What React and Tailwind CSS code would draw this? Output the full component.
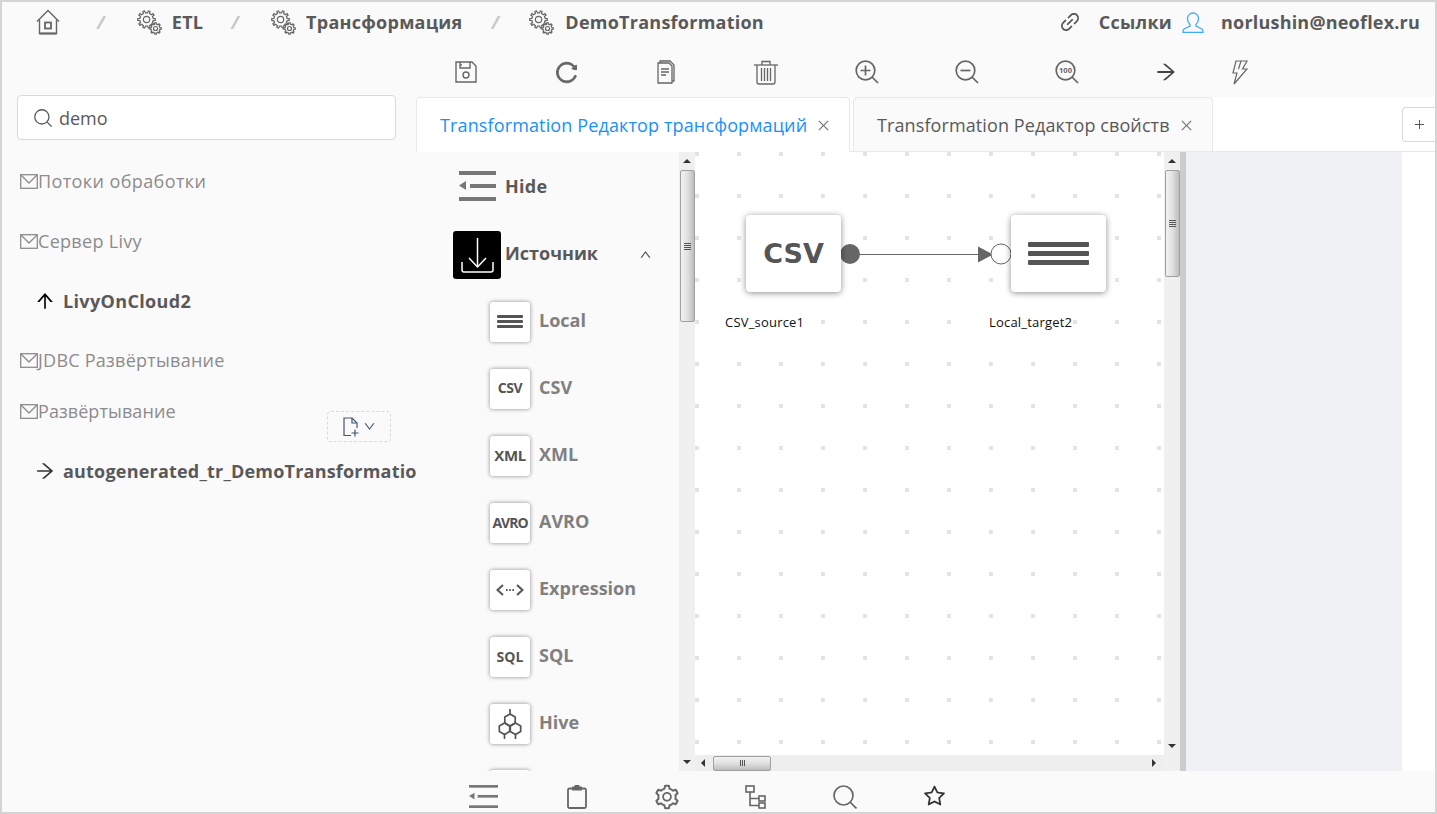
import React from "react";
import {
  AiOutlineArrowRight,
  AiOutlineArrowUp,
  AiOutlineClose,
  AiOutlineDown,
  AiOutlineLink,
  AiOutlinePlus,
  AiOutlineReload,
  AiOutlineSetting,
  AiOutlineStar,
  AiOutlineUp,
} from "react-icons/ai";

const FONT = "font-['Open_Sans',sans-serif]";

// --- Small drawings ---
function gearPath(cx, cy, r, teeth) {
  const pts = [];
  const step = (Math.PI * 2) / teeth;
  for (let i = 0; i < teeth; i++) {
    const a = i * step;
    const inner = r * 0.76;
    [
      [a - step * 0.5, inner],
      [a - step * 0.26, inner],
      [a - step * 0.16, r],
      [a + step * 0.16, r],
      [a + step * 0.26, inner],
    ].forEach(([t, rad]) => pts.push(`${(cx + Math.cos(t) * rad).toFixed(2)} ${(cy + Math.sin(t) * rad).toFixed(2)}`));
  }
  return "M" + pts.join("L") + "Z";
}

const Gears = () => (
  <svg width="25" height="25" viewBox="0 0 25 25" fill="none" stroke="#666" strokeWidth="1.2" className="shrink-0">
    <path d={gearPath(9.5, 9.5, 8.8, 10)} />
    <circle cx="9.5" cy="9.5" r="3.2" />
    <path d={gearPath(18.5, 18.5, 5.8, 8)} fill="#fafafa" />
    <circle cx="18.5" cy="18.5" r="2" />
  </svg>
);

const HomeIcon = () => (
  <svg width="24" height="26" viewBox="0 0 24 26" fill="none" stroke="#666" strokeWidth="1.4" className="shrink-0">
    <path d="M1 12.5 12 1.5l11 11" />
    <path d="M3.5 11v13.5h17V11" />
    <path d="M3.5 24.5h17" strokeWidth="2" />
    <rect x="9" y="13.5" width="6" height="6" strokeWidth="1.8" />
  </svg>
);

const UserIcon = () => (
  <svg width="22" height="21" viewBox="0 0 22 21" fill="none" stroke="#40a9ff" strokeWidth="1.3" className="shrink-0">
    <path d="M11 1a5.5 5.5 0 0 0-5.5 5.5c0 2.5 1 4.5 2.5 6V14l-6 3c-1 .5-1 1.5-1 3.5h20c0-2 0-3-1-3.5l-6-3v-1.5c1.5-1.5 2.5-3.5 2.5-6A5.5 5.5 0 0 0 11 1z" />
  </svg>
);

const SearchIcon = ({ size, width, color }) => (
  <svg width={size} height={size} viewBox="0 0 24 24" fill="none" stroke={color} strokeWidth={width} className="shrink-0">
    <circle cx="10.5" cy="10.5" r="9.5" />
    <path d="m17.5 17.5 6 6" />
  </svg>
);

const MailIcon = () => (
  <svg width="18" height="15" viewBox="0 0 18 15" fill="none" stroke="#8c8c8c" strokeWidth="1.3" className="shrink-0">
    <rect x="0.7" y="0.7" width="16.6" height="13.6" />
    <path d="m1 1 8 8 8-8" />
  </svg>
);

const FileAddIcon = () => (
  <svg width="17" height="20" viewBox="0 0 17 20" fill="none" stroke="#46566e" strokeWidth="1.2" className="shrink-0">
    <path d="M8 18.5H1V1h8l5 5v5" />
    <path d="M9 1v5h5" />
    <path d="M12 12.5v7M8.5 16h7" />
  </svg>
);

const Slash = ({ className }) => <span className={`text-[18px] text-[#c8c8c8] italic ${className}`}>/</span>;

const SaveIcon = () => (
  <svg width="22" height="22" viewBox="0 0 22 22" fill="none" stroke="#666" strokeWidth="1.4">
    <path d="M1 1h16l4 4v16H1z" />
    <path d="M5 1v6h10V1" />
    <path d="M6 3v2" />
    <circle cx="11" cy="14" r="3" />
  </svg>
);

const DocIcon = () => (
  <svg width="18" height="24" viewBox="0 0 18 24" fill="none" stroke="#666" strokeWidth="1.3">
    <path d="M3 3V1h10l4 4v16h-2" />
    <path d="M1 3h11l3 3v17H1z" />
    <path d="M4 9h8M4 12h8M4 15h5" />
  </svg>
);

const TrashIcon = () => (
  <svg width="24" height="25" viewBox="0 0 24 25" fill="none" stroke="#666" strokeWidth="1.3">
    <path d="M0 5h24" />
    <path d="M8 5V1.5h8V5" />
    <path d="M3 5v17a2 2 0 0 0 2 2h14a2 2 0 0 0 2-2V5" />
    <path d="M7.5 8v13M10.5 8v13M13.5 8v13M16.5 8v13" />
  </svg>
);

const ZoomIcon = ({ mark }) => (
  <svg width="24" height="24" viewBox="0 0 24 24" fill="none" stroke="#666" strokeWidth="1.7" className="translate-x-[1px]">
    <circle cx="10.5" cy="10.5" r="9.3" />
    <path d="m17 17 6 6" />
    {mark === "plus" && <path d="M5.5 10.5h10M10.5 5.5v10" />}
    {mark === "minus" && <path d="M5.5 10.5h10" />}
    {mark === "100" && (
      <text x="10.5" y="13.2" textAnchor="middle" fontSize="7.5" fontWeight="700" fill="#666" stroke="none" fontFamily="Open Sans">
        100
      </text>
    )}
  </svg>
);

const BoltIcon = () => (
  <svg width="16" height="25" viewBox="0 0 16 25" fill="none" stroke="#666" strokeWidth="1.2">
    <path d="M4 1h11l-4.5 8H15L2 24l3-11H1z" />
    <path d="M9 1 6.5 9" />
  </svg>
);

const HideIcon = ({ w, h, t }) => (
  <svg width={w} height={h} viewBox="0 0 37 30" fill="#777" preserveAspectRatio="none" className="shrink-0">
    <rect x="0" y="0" width="37" height={t} />
    <rect x="11" y="13" width="26" height={t} />
    <path d="M0 14.5 7 10v9z" />
    <rect x="0" y={30 - t} width="37" height={t} />
  </svg>
);

const DownloadIcon = () => (
  <svg width="48" height="48" viewBox="0 0 48 48" fill="none" stroke="#fff" strokeWidth="1.5">
    <path d="M24.5 7v29" />
    <path d="m16 27 8.5 9 8.5-9" />
    <path d="M9 31v8a2 2 0 0 0 2 2h27a2 2 0 0 0 2-2v-8" />
  </svg>
);

const ClipboardIcon = () => (
  <svg width="20" height="24" viewBox="0 0 20 24" fill="none" stroke="#666" strokeWidth="1.8">
    <rect x="1" y="3.5" width="18" height="19.5" rx="1.5" />
    <path d="M6 4.5V2.5h2.5V1h3v1.5H14v2z" fill="#666" />
  </svg>
);

const TreeIcon = () => (
  <svg width="21" height="24" viewBox="0 0 21 24" fill="none" stroke="#666" strokeWidth="1.6">
    <rect x="1" y="1" width="8" height="6" />
    <rect x="14" y="11" width="6" height="5" />
    <rect x="14" y="18" width="6" height="5" />
    <path d="M5 7v13.5h9M5 13.5h9" />
  </svg>
);

const HiveIcon = () => (
  <svg width="24" height="30" viewBox="0 0 24 30" fill="none" stroke="#555" strokeWidth="1.7">
    <path d="M12 0v5" />
    <path d="m12 5 5.2 3v6L12 17l-5.2-3V8z" />
    <path d="m6.5 14 5.2 3v5.5l-5.2 3-5.2-3V17z" />
    <path d="m17.5 14 5.2 3v5.5l-5.2 3-5.2-3V17z" />
    <path d="M6.5 25.5V30M17.5 25.5V30" />
  </svg>
);

const ExprIcon = () => (
  <svg width="28" height="14" viewBox="0 0 28 14" fill="none" stroke="#555" strokeWidth="2">
    <path d="M7 2 1.5 7 7 12" />
    <path d="M21 2l5.5 5-5.5 5" />
    <path d="M10 7h1.6M13.2 7h1.6M16.4 7H18" />
  </svg>
);

const LinesIcon = ({ w, bar, gap, color = "#555" }) => (
  <div className="flex flex-col" style={{ width: w, gap }}>
    {[0, 1, 2].map((i) => (
      <div key={i} className="rounded-[1px]" style={{ height: bar, background: color }} />
    ))}
  </div>
);

// --- Fake Windows style scrollbars ---
const Arrow = ({ dir }) => {
  const cls = {
    up: "border-x-[4px] border-b-[4px] border-x-transparent border-b-[#333]",
    down: "border-x-[4px] border-t-[4px] border-x-transparent border-t-[#333]",
    left: "border-y-[4px] border-r-[4px] border-y-transparent border-r-[#333]",
    right: "border-y-[4px] border-l-[4px] border-y-transparent border-l-[#333]",
  }[dir];
  return <div className={`w-0 h-0 ${cls}`} />;
};

const VScroll = ({ thumb }) => (
  <div className="w-[16px] shrink-0 bg-[#f0f0f0] flex flex-col items-center">
    <div className="h-[18px] flex items-center justify-center shrink-0">
      <Arrow dir="up" />
    </div>
    <div
      className="w-[15px] shrink-0 rounded-[2px] border border-[#a0a0a0] bg-gradient-to-r from-[#f2f2f2] via-[#e0e0e0] to-[#bdbdbd] flex flex-col items-center justify-center gap-[1px]"
      style={{ height: thumb }}
    >
      <div className="w-[7px] h-[1px] bg-[#555]" />
      <div className="w-[7px] h-[1px] bg-[#555]" />
      <div className="w-[7px] h-[1px] bg-[#555]" />
      <div className="w-[7px] h-[1px] bg-[#555]" />
    </div>
    <div className="flex-1" />
    <div className="h-[18px] flex items-center justify-center shrink-0">
      <Arrow dir="down" />
    </div>
  </div>
);

const HScroll = () => (
  <div className="h-[16px] shrink-0 bg-[#eeeeee] flex items-center">
    <div className="w-[16px] flex justify-center">
      <Arrow dir="left" />
    </div>
    <div className="ml-[2px] w-[58px] h-[15px] rounded-[2px] border border-[#a0a0a0] bg-gradient-to-b from-[#f2f2f2] via-[#e0e0e0] to-[#bdbdbd] flex items-center justify-center gap-[1px]">
      <div className="w-[1px] h-[6px] bg-[#555]" />
      <div className="w-[1px] h-[6px] bg-[#555]" />
      <div className="w-[1px] h-[6px] bg-[#555]" />
    </div>
    <div className="flex-1" />
    <div className="w-[18px] flex justify-center">
      <Arrow dir="right" />
    </div>
  </div>
);

const TREE = [
  { label: "Потоки обработки", mt: "mt-[29px]", track: "tracking-[0.4px]" },
  { label: "Сервер Livy", mt: "mt-[36px]", track: "tracking-[0.3px]" },
  { label: "LivyOnCloud2", icon: AiOutlineArrowUp, color: "text-black", mt: "mt-[36px]", track: "tracking-[0.35px]" },
  { label: "JDBC Развёртывание", mt: "mt-[35px]", track: "tracking-[0.25px]" },
  { label: "Развёртывание", mt: "mt-[27px]", track: "tracking-[0.08px]" },
  { label: "autogenerated_tr_DemoTransformatio", icon: AiOutlineArrowRight, color: "text-[#333]", mt: "mt-[36px]", track: "tracking-[0.2px]" },
];

const PALETTE = [
  { label: "Local", box: <LinesIcon w={26} bar={3} gap={2} /> },
  { label: "CSV", box: <span className="text-[14px] font-bold text-[#555] tracking-tight -translate-y-[1px]">CSV</span> },
  { label: "XML", box: <span className="text-[15px] font-bold text-[#555] tracking-tight">XML</span> },
  { label: "AVRO", box: <span className="text-[14px] font-bold text-[#555] tracking-[-1px]">AVRO</span> },
  { label: "Expression", box: <ExprIcon /> },
  { label: "SQL", box: <span className="text-[14px] font-bold text-[#555]">SQL</span> },
  { label: "Hive", box: <HiveIcon /> },
];

const PaletteBox = ({ children }) => (
  <div className="w-[40px] h-[40px] shrink-0 rounded-[3px] bg-white shadow-[0_0_4px_rgba(0,0,0,0.45)] flex items-center justify-center">
    {children}
  </div>
);

const ToolBtn = ({ children, className = "w-[100px]" }) => <div className={`flex justify-center shrink-0 ${className}`}>{children}</div>;

export default function App() {
  return (
    <div className={`${FONT} w-[1437px] h-[814px] border-2 border-[#d4d4d4] bg-[#fafafa] flex flex-col overflow-hidden`}>
      <header className="h-10 shrink-0 flex items-center pl-[34px] pr-[15px] text-[18px] font-bold text-[#595959] tracking-[0.25px]">
        <HomeIcon />
        <Slash className="ml-[37px]" />
        <div className="ml-[32px]"><Gears /></div>
        <span className="ml-[10px]">ETL</span>
        <Slash className="ml-[28px]" />
        <div className="ml-[32px]"><Gears /></div>
        <span className="ml-[10px]">Трансформация</span>
        <Slash className="ml-[29px]" />
        <div className="ml-[30px]"><Gears /></div>
        <span className="ml-[11px]">DemoTransformation</span>
        <div className="flex-1" />
        <AiOutlineLink className="text-[24px] text-[#555]" />
        <span className="ml-[17px]">Ссылки</span>
        <div className="ml-[10px]"><UserIcon /></div>
        <span className="ml-[17px] tracking-[0.2px]">norlushin@neoflex.ru</span>
      </header>

      <div className="flex-1 flex min-h-0">
        <aside className="w-[414px] shrink-0 relative overflow-hidden text-[18px] pt-[53px]">
          <div className="ml-[15px] w-[379px] h-[45px] bg-white border border-[#d9d9d9] rounded-[4px] flex items-center pl-[16px] text-[#595959]">
            <SearchIcon size={18} width={1.7} color="#595959" />
            <span className="ml-[7px] translate-y-[1px]">demo</span>
          </div>
          {TREE.map((row) => {
            const Icon = row.icon;
            return Icon ? (
              <div key={row.label} className={`${row.mt} ${row.track} pl-[32px] h-[24px] flex items-center whitespace-nowrap font-bold text-[#595959]`}>
                <Icon className={`text-[22px] shrink-0 ${row.color}`} />
                <span className="ml-[7px]">{row.label}</span>
              </div>
            ) : (
              <div key={row.label} className={`${row.mt} ${row.track} pl-[18px] h-[24px] flex items-center whitespace-nowrap text-[#8c8c8c]`}>
                <MailIcon />
                <span>{row.label}</span>
              </div>
            );
          })}
          <div className="absolute left-[325px] top-[369px] w-[64px] h-[31px] bg-[#fafafa] border border-dashed border-[#d9d9d9] rounded-[4px] flex items-center justify-center gap-[3px]">
            <FileAddIcon />
            <AiOutlineDown className="text-[13px] text-[#46566e]" />
          </div>
        </aside>

        <main className="flex-1 min-w-0 flex flex-col">
          <div className="h-[55px] shrink-0 pt-[5px] flex items-center">
            <ToolBtn><SaveIcon /></ToolBtn>
            <ToolBtn><AiOutlineReload className="text-[25px] text-[#666] stroke-[40px]" /></ToolBtn>
            <ToolBtn><DocIcon /></ToolBtn>
            <ToolBtn><TrashIcon /></ToolBtn>
            <ToolBtn><ZoomIcon mark="plus" /></ToolBtn>
            <ToolBtn><ZoomIcon mark="minus" /></ToolBtn>
            <ToolBtn><ZoomIcon mark="100" /></ToolBtn>
            <ToolBtn><AiOutlineArrowRight className="text-[24px] text-[#444]" /></ToolBtn>
            <ToolBtn className="w-[48px]"><BoltIcon /></ToolBtn>
          </div>

          <div className="h-[55px] shrink-0 bg-white border-b border-[#e8e8e8] flex items-start text-[18px] relative">
            <div className="w-[434px] h-[55px] bg-white border border-b-0 border-[#e8e8e8] rounded-t-[4px] flex items-center pl-[23px] text-[#1890ff] whitespace-nowrap tracking-[0.13px]">
              Transformation Редактор трансформаций
              <AiOutlineClose className="ml-[9px] text-[15px] text-[#777]" />
            </div>
            <div className="ml-[3px] w-[360px] h-[54px] pt-[1px] bg-[#fafafa] border border-b-0 border-[#e8e8e8] rounded-t-[4px] flex items-center pl-[23px] text-[#595959] whitespace-nowrap tracking-[0.1px]">
              Transformation Редактор свойств
              <AiOutlineClose className="ml-[9px] text-[15px] text-[#777]" />
            </div>
            <div className="ml-auto mt-[10px] w-[33px] h-[35px] bg-white border border-r-0 border-[#d9d9d9] rounded-l-[4px] flex items-center justify-center text-[#555]">
              <AiOutlinePlus className="text-[13px]" />
            </div>
          </div>

          <div className="flex-1 min-h-0 flex">
            <div className="w-[263px] shrink-0 overflow-hidden">
              <div className="h-[68px] flex items-center pl-[43px]">
                <HideIcon w={37} h={30} t={4} />
                <span className="ml-[9px] text-[18px] font-bold text-[#595959] tracking-[0.3px]">Hide</span>
              </div>
              <div className="h-[68px] flex items-start pt-[11px] pl-[37px]">
                <div className="w-[48px] h-[48px] bg-black rounded-[3px] shrink-0">
                  <DownloadIcon />
                </div>
                <span className="ml-[4px] mt-[9px] text-[18px] font-bold text-[#595959]">Источник</span>
                <AiOutlineUp className="ml-[41px] mt-[17px] text-[13px] text-[#444]" />
              </div>
              {PALETTE.map((item) => (
                <div key={item.label} className="h-[67px] flex items-center pl-[74px]">
                  <PaletteBox>{item.box}</PaletteBox>
                  <span className="ml-[9px] text-[18px] font-bold text-[#808080] -translate-y-[1px]">{item.label}</span>
                </div>
              ))}
              <div className="h-[67px] flex items-start pt-[13px] pl-[74px]">
                <PaletteBox />
              </div>
            </div>

            <VScroll thumb={152} />

            <div className="w-[485px] shrink-0 flex flex-col">
              <div className="flex-1 min-h-0 flex">
                <div className="flex-1 relative bg-white overflow-hidden">
                  <svg className="absolute inset-0 w-full h-full">
                    <defs>
                      <pattern id="dots" x="0" y="0" width="42" height="42" patternUnits="userSpaceOnUse">
                        <rect x="0" y="0" width="4" height="4" fill="#e4e4e4" />
                      </pattern>
                    </defs>
                    <rect x="0" y="0" width="100%" height="100%" fill="url(#dots)" />
                    <path d="M155 102.5h128" stroke="#666" strokeWidth="1.2" />
                    <path d="M283 94.5 298 102.5 283 110.5z" fill="#666" />
                    <circle cx="155" cy="102" r="10" fill="#666" />
                    <circle cx="306" cy="102" r="10" fill="#fff" stroke="#666" strokeWidth="1" />
                  </svg>
                  <div className="absolute left-[51px] top-[63px] w-[95px] h-[77px] pt-[2px] bg-white rounded-[4px] shadow-[0_1px_6px_rgba(0,0,0,0.45)] flex items-center justify-center font-['DejaVu_Sans',sans-serif] text-[27px] font-bold text-[#555]">
                    CSV
                  </div>
                  <div className="absolute left-[316px] top-[63px] w-[95px] h-[77px] bg-white rounded-[4px] shadow-[0_1px_6px_rgba(0,0,0,0.45)] flex items-center justify-center">
                    <LinesIcon w={61} bar={5} gap={4} />
                  </div>
                  <div className="absolute left-[30px] top-[161px] bg-white text-[13px] text-[#111] tracking-[0.2px]">CSV_source1</div>
                  <div className="absolute left-[294px] top-[161px] bg-white text-[13px] text-[#111] tracking-[0.2px]">Local_target2</div>
                </div>
                <VScroll thumb={107} />
              </div>
              <div className="flex shrink-0">
                <div className="w-[468px]"><HScroll /></div>
                <div className="flex-1 bg-[#f0f0f0]" />
              </div>
            </div>

            <div className="w-[6px] shrink-0 bg-[#cccccc]" />
            <div className="w-[216px] shrink-0 bg-[#eff1f5]" />
            <div className="flex-1 bg-white" />
          </div>

          <div className="h-[41px] shrink-0 flex items-center pt-[10px]">
            <ToolBtn className="w-[134px]"><HideIcon w={29} h={23} t={3.5} /></ToolBtn>
            <ToolBtn className="w-[54px]"><ClipboardIcon /></ToolBtn>
            <ToolBtn className="w-[126px]"><AiOutlineSetting className="text-[28px] text-[#666]" /></ToolBtn>
            <ToolBtn className="w-[50px]"><TreeIcon /></ToolBtn>
            <ToolBtn className="w-[130px]"><SearchIcon size={24} width={1.7} color="#666" /></ToolBtn>
            <ToolBtn className="w-[48px]"><AiOutlineStar className="text-[25px] text-[#333]" /></ToolBtn>
          </div>
        </main>
      </div>
    </div>
  );
}
